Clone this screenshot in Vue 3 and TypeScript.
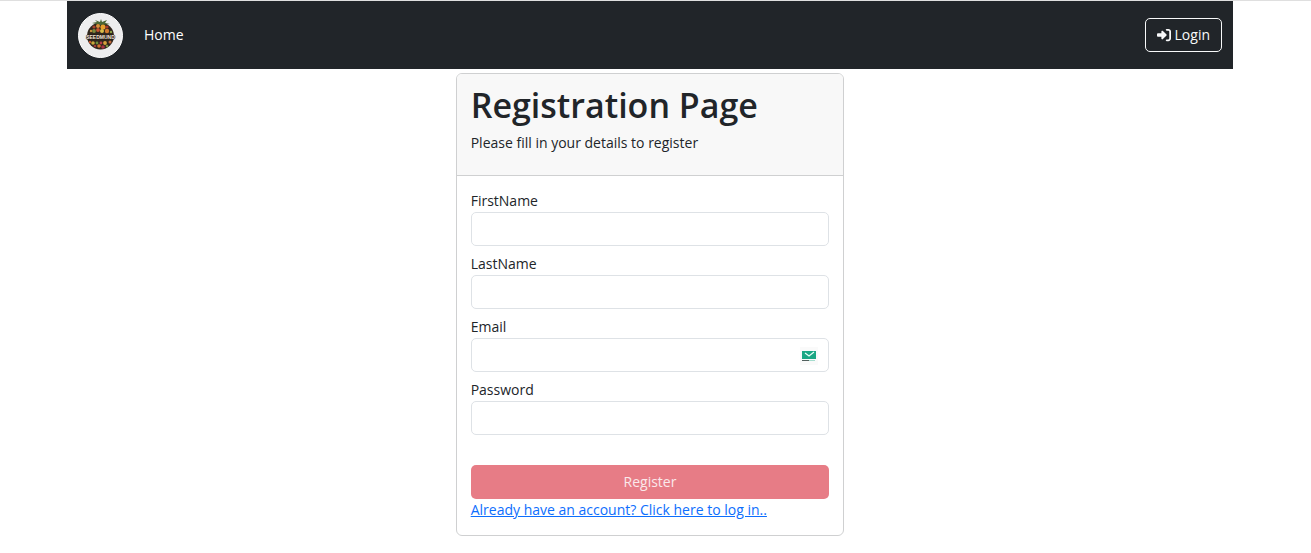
<script setup lang="ts">
import { reactive } from 'vue'

interface Field {
  id: 'firstName' | 'lastName' | 'email' | 'password'
  label: string
  type: string
}

interface Fruit {
  x: number
  y: number
  r: number
  color: string
}

const fields: Field[] = [
  { id: 'firstName', label: 'FirstName', type: 'text' },
  { id: 'lastName', label: 'LastName', type: 'text' },
  { id: 'email', label: 'Email', type: 'email' },
  { id: 'password', label: 'Password', type: 'password' },
]

const form = reactive({ firstName: '', lastName: '', email: '', password: '' })

const fruits: Fruit[] = [
  { x: 16, y: 14, r: 1.6, color: '#a8452c' },
  { x: 20, y: 13, r: 2, color: '#d9913a' },
  { x: 25, y: 14, r: 2.6, color: '#e8a02c' },
  { x: 29, y: 14, r: 1.6, color: '#a83a2a' },
  { x: 13, y: 18, r: 1.2, color: '#c9913a' },
  { x: 16, y: 18, r: 1.9, color: '#7c8a3c' },
  { x: 20, y: 17, r: 1.9, color: '#c8542e' },
  { x: 24, y: 18, r: 2, color: '#d9be4a' },
  { x: 29, y: 18, r: 2.2, color: '#d27a2e' },
  { x: 33, y: 19, r: 1.2, color: '#8ba04a' },
  { x: 12, y: 29, r: 1.2, color: '#c8542e' },
  { x: 15, y: 30, r: 1.8, color: '#c9a83a' },
  { x: 19, y: 30, r: 1.4, color: '#6d8f3a' },
  { x: 23, y: 30, r: 1.4, color: '#b83a4a' },
  { x: 27, y: 30, r: 1.9, color: '#d9a13a' },
  { x: 32, y: 29, r: 1.5, color: '#c0683a' },
  { x: 17, y: 33, r: 1.3, color: '#a03a3a' },
  { x: 21, y: 33, r: 1.8, color: '#d5732e' },
  { x: 25, y: 34, r: 1.8, color: '#a83246' },
  { x: 29, y: 33, r: 1.3, color: '#7a9044' },
]
</script>

<template>
  <div class="page">
    <div class="container">
      <nav class="navbar">
        <div class="nav-left">
          <a href="#" class="brand" aria-label="Seedmund">
            <svg class="logo" viewBox="0 0 45 45" aria-hidden="true">
              <circle cx="22.5" cy="22.5" r="22" fill="#ededee" stroke="#fff" />
              <circle cx="22.5" cy="23" r="13.5" fill="#30261d" />
              <path d="M22.5 12 14 10l5-1-2-2 5 2 1-3 1 3 5-2-2 3 5 1z" fill="#4c6735" />
              <circle
                v-for="(fruit, i) in fruits"
                :key="i"
                :cx="fruit.x"
                :cy="fruit.y"
                :r="fruit.r"
                :fill="fruit.color"
              />
              <text x="22.5" y="26" text-anchor="middle" class="logo-text">SEEDMUND</text>
            </svg>
          </a>
          <a href="#" class="nav-link">Home</a>
        </div>
        <button type="button" class="login">
          <svg class="login-icon" viewBox="0 0 512 512" aria-hidden="true">
            <path
              fill="currentColor"
              d="M217 106 340 229c8 7 12 17 12 27s-4 20-12 27L217 406c-6 6-14 10-23 10-19 0-34-15-34-34v-62H32c-18 0-32-14-32-32v-64c0-18 14-32 32-32h128v-62c0-19 15-34 34-34 9 0 17 4 23 10zM352 416h64c18 0 32-14 32-32V128c0-18-14-32-32-32h-64c-18 0-32-14-32-32s14-32 32-32h64c53 0 96 43 96 96v256c0 53-43 96-96 96h-64c-18 0-32-14-32-32s14-32 32-32z"
            />
          </svg>
          <span>Login</span>
        </button>
      </nav>

      <main class="card">
        <header class="card-header">
          <h1>Registration Page</h1>
          <p>Please fill in your details to register</p>
        </header>
        <form class="card-body" @submit.prevent>
          <div class="fields">
            <div v-for="field in fields" :key="field.id" class="field">
              <label :for="field.id">{{ field.label }}</label>
              <div class="control">
                <input :id="field.id" v-model="form[field.id]" :type="field.type" />
                <svg
                  v-if="field.id === 'email'"
                  class="mail-icon"
                  viewBox="0 0 18 18"
                  aria-hidden="true"
                >
                  <rect width="18" height="18" fill="#fafafa" />
                  <rect x="2" y="4" width="14" height="8" fill="#1ba784" />
                  <path d="m5 6 4 3 5-4" fill="none" stroke="#e9fff8" stroke-width="1.2" />
                  <rect x="2" y="13" width="7" height="1" fill="#53615f" />
                  <rect x="9" y="13" width="6" height="1" fill="#a5dccd" />
                </svg>
              </div>
            </div>
          </div>
          <button type="submit" class="register" disabled>Register</button>
          <a href="#" class="login-link">Already have an account? Click here to log in..</a>
        </form>
      </main>
    </div>
  </div>
</template>

<style>
body {
  margin: 0;
  background: #fff;
}
</style>

<style scoped>
.page {
  box-sizing: border-box;
  padding-right: 11px;
  border-top: 1px solid #dfdfdf;
  font-family: "Segoe UI", "Open Sans", "Noto Sans", sans-serif;
  font-size: 14px;
  line-height: 22px;
  color: #212529;
}

.container {
  max-width: 1166px;
  margin: 0 auto;
}

.navbar {
  display: flex;
  align-items: center;
  justify-content: space-between;
  box-sizing: border-box;
  min-height: 68px;
  padding: 0 11px;
  background: #212529;
}

.nav-left {
  display: flex;
  align-items: center;
  gap: 21px;
}

.brand,
.logo {
  display: block;
  width: 45px;
  height: 45px;
}

.logo-text {
  font: bold 5px "Liberation Sans", sans-serif;
  fill: #f3e6d8;
  stroke: #241c18;
  stroke-width: 1px;
  paint-order: stroke;
}

.nav-link {
  color: #fff;
  font-weight: 500;
  text-decoration: none;
}

.login {
  display: flex;
  align-items: center;
  gap: 4px;
  box-sizing: border-box;
  height: 34px;
  padding: 0 11px;
  border: 1px solid #f8f9fa;
  border-radius: 5px;
  background: transparent;
  color: #f8f9fa;
  font: inherit;
  font-weight: 500;
}

.login-icon {
  width: 14px;
  height: 14px;
}

.card {
  box-sizing: border-box;
  width: 33.333%;
  min-width: 320px;
  margin: 4px auto 0;
  border: 1px solid #cfd0d1;
  border-radius: 6px;
  overflow: hidden;
}

.card-header {
  padding: 9px 14px 21px;
  border-bottom: 1px solid #cfd0d1;
  background: #f8f8f8;
}

h1 {
  margin: 0 0 5px;
  font-size: 34px;
  line-height: 44px;
  font-weight: 600;
}

p {
  margin: 0;
}

.card-body {
  display: flex;
  flex-direction: column;
  padding: 14px;
}

.fields {
  display: grid;
  gap: 7px;
  margin-bottom: 30px;
}

label {
  display: block;
}

.control {
  position: relative;
}

input {
  display: block;
  box-sizing: border-box;
  width: 100%;
  height: 34px;
  padding: 5px 11px;
  border: 1px solid #dee2e6;
  border-radius: 5px;
  background: #fff;
  color: inherit;
  font: inherit;
}

.mail-icon {
  position: absolute;
  top: 9px;
  right: 11px;
  width: 18px;
  height: 18px;
}

.register {
  height: 34px;
  padding: 0;
  border: 0;
  border-radius: 5px;
  background: #e77c86;
  color: #fbe9eb;
  font: inherit;
  font-weight: 500;
}

.login-link {
  align-self: flex-start;
  color: #0d6efd;
  text-decoration: underline;
}
</style>
